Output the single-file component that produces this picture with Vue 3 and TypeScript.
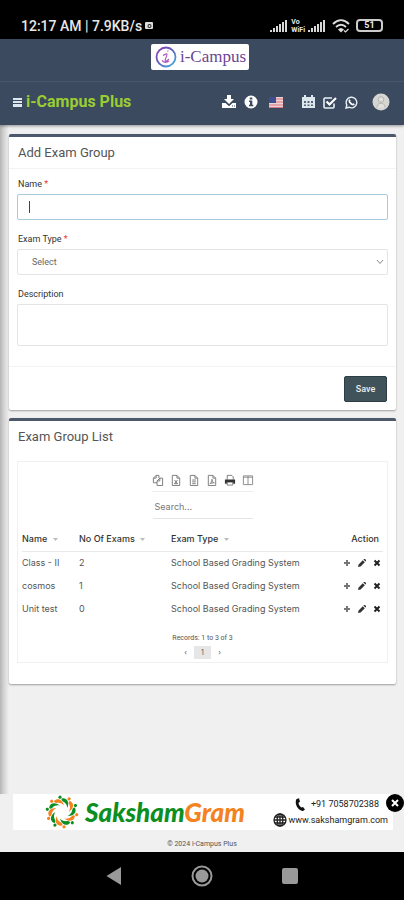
<script setup lang="ts">
import { ref } from 'vue'

interface ExamGroup {
  name: string
  exams: number
  type: string
}

const examName = ref('')
const examType = ref('')
const description = ref('')
const search = ref('')
const bannerOpen = ref(true)

const groups = ref<ExamGroup[]>([
  { name: 'Class - II', exams: 2, type: 'School Based Grading System' },
  { name: 'cosmos', exams: 1, type: 'School Based Grading System' },
  { name: 'Unit test', exams: 0, type: 'School Based Grading System' },
])

const fileOutline = 'M2.5 1.5h5l3 3v8h-8z M7.5 1.5v3h3'
const exportTools = [
  { label: 'Copy', d: 'M4.5 1.5h3v3M4.5 1.5l-3 3v5h4M4.5 1.5v3h-3 M8.500 4.500h3v8h-6v-5z M8.500 4.500v3h-3' },
  { label: 'Excel', d: fileOutline + ' M5 6.500l3 4 M8 6.500l-3 4 M4.500 10.500h4' },
  { label: 'CSV', d: fileOutline + ' M4.500 6.500h4 M4.500 8.500h4 M4.500 10.500h4' },
  { label: 'PDF', d: fileOutline + ' M4 11c2-2 2.500-3 2.500-5.500 M6.500 6c0 2 1 3 2.500 3.500l-4 .5' },
]

const signalBars = [2, 4, 6, 8, 10, 12]
const petals = [0, 1, 2, 3, 4, 5, 6, 7, 8, 9]
</script>

<template>
  <div class="screen">
    <div class="status">
      <span class="clock">12:17 AM | 7.9KB/s</span>
      <svg class="cam" viewBox="0 0 8 8" width="8" height="8"><rect width="8" height="7" rx="1" fill="#ddd" /><circle cx="4.500" cy="4" r="2" fill="#222" /><circle cx="4.500" cy="4" r="1" fill="#eee" /></svg>
      <div class="status-icons">
        <svg viewBox="0 0 18 13" width="18" height="13"><rect v-for="(h, i) in signalBars" :key="h" :x="i * 3" :y="13 - h" width="2" :height="h" fill="#d8d8d8" /></svg>
        <span class="vowifi"><b>Vo</b><small>WiFi</small></span>
        <svg viewBox="0 0 18 13" width="18" height="13"><rect v-for="(h, i) in signalBars" :key="h" :x="i * 3" :y="13 - h" width="2" :height="h" fill="#d8d8d8" /></svg>
        <svg class="wifi" viewBox="0 0 18 14" width="18" height="14" fill="none" stroke="#ddd" stroke-width="1.800"><path d="M1 5c5-5 11-5 16 0M4 8c3-3 7-3 10 0" /><path d="M6 10.500c2-2 4-2 6 0l-3 3z" fill="#ddd" stroke="none" /><path d="M12 11.500l1.500 1.500 3-3" stroke-width="1.200" /></svg>
        <span class="battery">51</span>
      </div>
    </div>

    <header class="header">
      <div class="brand-row">
        <a class="logo" href="#">
          <svg viewBox="0 0 22 22" width="22" height="22" fill="none">
            <defs><linearGradient id="ring" x1="0" y1="0" x2="1" y2="1"><stop offset="0" stop-color="#8b3fae" /><stop offset="0.500" stop-color="#5b62bd" /><stop offset="1" stop-color="#41b6e0" /></linearGradient></defs>
            <circle cx="11" cy="11" r="9.500" stroke="url(#ring)" stroke-width="1.800" />
            <path d="M8 9.500c2-1 3.500-2 4-1.500.8.8-3 6.500-1.500 7 1 .3 2.500-1 3.500-2M12.500 5.500l.8-1M7 14.500c2 2 5 2 7 .5" stroke="#b05ac0" stroke-width="1.200" />
          </svg>
          <span>i-Campus</span>
        </a>
      </div>
      <nav class="toolbar">
        <button class="icon-btn" aria-label="Menu"><svg viewBox="0 0 9 9" width="9" height="9"><path d="M0 0h9v2H0zM0 3h9v2H0zM0 6h9v3H0z" fill="#dde6ee" /></svg></button>
        <a class="site" href="#">i-Campus Plus</a>
        <div class="tools">
          <button class="icon-btn" aria-label="Download"><svg viewBox="0 0 14 14" width="14" height="14" fill="#fff"><path d="M5 0h4v4h3L7 9 2 4h3zM0 8h3.500L7 11.200 10.500 8H14v5H0z" /><path d="M10 11h1M12 11h1" stroke="#3b4a5f" /></svg></button>
          <button class="icon-btn" aria-label="Information"><svg viewBox="0 0 14 14" width="14" height="14"><circle cx="7" cy="7" r="6.500" fill="#fff" /><path d="M5.800 2.500h2.500v2H5.800zM5 5.500h3.300v4.300h1v1.500H5V9.800h1V7H5z" fill="#3b4a5f" /></svg></button>
          <button class="icon-btn flag" aria-label="Language"><svg viewBox="0 0 14 11" width="14" height="11"><rect width="14" height="11" fill="#eed3d5" /><path d="M0 2h14M0 5h14M0 8h14M0 10.500h14" stroke="#d5777f" stroke-width="1.200" /><rect width="7" height="6" fill="#3e4f8e" /></svg></button>
          <button class="icon-btn" aria-label="Calendar"><svg viewBox="0 0 13 14" width="13" height="14"><path d="M0 2h2V0h2v2h5V0h2v2h2v11H0z" fill="#dce7ee" /><path d="M2 6h2v2H2zM5.500 6h2v2h-2zM9 6h2v2H9zM2 9.500h2v1.500H2zM5.500 9.500h2v1.500h-2zM9 9.500h2v1.500H9z" fill="#526579" /></svg></button>
          <button class="icon-btn" aria-label="Tasks"><svg viewBox="0 0 14 13" width="14" height="13" fill="none" stroke="#e6f1f4"><path d="M11 7.500V11a1 1 0 0 1-1 1H2a1 1 0 0 1-1-1V3a1 1 0 0 1 1-1h7" stroke-width="1.600" /><path d="M3.500 5.500l3 3L13 2" stroke-width="2.200" stroke="#fff" /></svg></button>
          <button class="icon-btn" aria-label="WhatsApp"><svg viewBox="0 0 13 13" width="13" height="13" fill="none"><path d="M1 12l.8-3A5.300 5.300 0 1 1 4 11.200z" stroke="#e6f1f4" stroke-width="1.400" /><path d="M4.300 3.300l1.200 1-.3 1.200 2.200 2.200 1.200-.4 1.200 1c-1 2-3.500 1-4.800-.5C3.400 6.500 3 4.500 4.300 3.300z" fill="#fff" /></svg></button>
          <button class="icon-btn avatar" aria-label="Profile"><svg viewBox="0 0 18 18" width="18" height="18"><circle cx="9" cy="9" r="8.500" fill="#d5d5d2" /><circle cx="9" cy="6.500" r="2.800" fill="#e0e0dd" stroke="#b2b2af" /><path d="M5 14.500c.5-4 2-4 4-4s3.500 0 4 4" fill="#e0e0dd" stroke="#b2b2af" /></svg></button>
        </div>
      </nav>
    </header>

    <main class="content">
      <form class="card" @submit.prevent>
        <h2>Add Exam Group</h2>
        <div class="fields">
          <label for="name">Name <i>*</i></label>
          <div class="control"><input id="name" v-model="examName" class="box focused" type="text" /><span class="caret"></span></div>
          <label for="type">Exam Type <i>*</i></label>
          <div class="control">
            <select id="type" v-model="examType" class="box">
              <option value="">Select</option>
              <option>School Based Grading System</option>
            </select>
            <svg class="chevron" viewBox="0 0 8 6" width="8" height="6" fill="none" stroke="#888"><path d="M1 1l3 3.500L7 1" /></svg>
          </div>
          <label for="description">Description</label>
          <textarea id="description" v-model="description" class="box"></textarea>
        </div>
        <div class="actions"><button class="save" type="submit">Save</button></div>
      </form>

      <section class="card list">
        <h2>Exam Group List</h2>
        <div class="panel">
          <div class="exports">
            <button v-for="tool in exportTools" :key="tool.label" class="icon-btn" :aria-label="tool.label"><svg viewBox="0 0 13 13" width="12" height="12" fill="none" stroke="#777"><path :d="tool.d" /></svg></button>
            <button class="icon-btn" aria-label="Print"><svg viewBox="0 0 13 13" width="12" height="12"><path d="M3.500 6V1.500h5l1.500 1.500V6M3.500 8.500v3.500h6V8.500z" fill="#fff" stroke="#777" /><path d="M1 6h11v4.500H10V9H3v1.500H1z" fill="#333" /></svg></button>
            <button class="icon-btn" aria-label="Columns"><svg viewBox="0 0 13 13" width="12" height="12" fill="none" stroke="#888"><path d="M1.500 2h10v9.500h-10zM6.500 2v9.500M1.500 3.500h10" /></svg></button>
          </div>
          <input v-model="search" class="search" type="text" placeholder="Search..." aria-label="Search" />
          <table>
            <thead>
              <tr>
                <th class="c-name">Name <svg viewBox="0 0 5 3" width="5" height="3"><path d="M0 0h5L2.500 3z" /></svg></th>
                <th class="c-num">No Of Exams <svg viewBox="0 0 5 3" width="5" height="3"><path d="M0 0h5L2.500 3z" /></svg></th>
                <th>Exam Type <svg viewBox="0 0 5 3" width="5" height="3"><path d="M0 0h5L2.500 3z" /></svg></th>
                <th class="c-act">Action</th>
              </tr>
            </thead>
            <tbody>
              <tr v-for="group in groups" :key="group.name">
                <td>{{ group.name }}</td>
                <td>{{ group.exams }}</td>
                <td>{{ group.type }}</td>
                <td>
                  <div class="row-actions">
                    <button class="icon-btn" aria-label="Add exam"><svg viewBox="0 0 8 8" width="8" height="8" stroke="#777" stroke-width="2"><path d="M4 1v6M1 4h6" /></svg></button>
                    <button class="icon-btn" aria-label="Edit"><svg viewBox="0 0 8 8" width="8" height="8" fill="#333"><path d="M0 8l.6-2.600L4.800 1.200l2 2L2.600 7.400zM5.400.6L6 0h1l1 1v1l-.6.6z" /></svg></button>
                    <button class="icon-btn" aria-label="Delete"><svg viewBox="0 0 8 8" width="8" height="8" stroke="#222" stroke-width="2"><path d="M1.500 1.500l5 5M6.500 1.500l-5 5" /></svg></button>
                  </div>
                </td>
              </tr>
            </tbody>
          </table>
          <div class="records">Records: 1 to 3 of 3</div>
          <div class="pages">
            <button aria-label="Previous page">‹</button>
            <button class="current">1</button>
            <button aria-label="Next page">›</button>
          </div>
        </div>
      </section>
    </main>

    <footer class="footer">
      <div v-if="bannerOpen" class="banner">
        <a class="sponsor" href="#">
          <svg viewBox="-17 -17 34 34" width="34" height="34">
            <g v-for="p in petals" :key="p" :transform="`rotate(${p * 36})`" :fill="p % 2 ? '#f58220' : '#0b8f22'">
              <path d="M0-13.500C4-14.500 8-11 5.500-4 5-7 4-9 1-10.500-.5-11.500-1-13-0-13.500z" />
              <circle cx="-2" cy="-14.800" r="1.600" />
            </g>
          </svg>
          <span class="wordmark">Saksham<em>Gram</em></span>
        </a>
        <div class="contact">
          <div class="line"><svg viewBox="0 0 10 13" width="10" height="13"><path d="M1.500 1L4 .2l1 3.500-1.500 1c.3 2 1.300 3.600 2.800 4.800l1.700-.6 2 2.600-2 1.500C3 12.500-1 6 1.500 1z" fill="#111" /></svg><span>+91 7058702388</span></div>
          <div class="line"><svg viewBox="0 0 14 14" width="14" height="14" fill="none" stroke="#222" stroke-width="1.300"><circle cx="7" cy="7" r="6" /><ellipse cx="7" cy="7" rx="2.800" ry="6" /><path d="M1 7h12M2 4h10M2 10h10M7 1v12" /></svg><span>www.sakshamgram.com</span></div>
        </div>
        <button class="close" aria-label="Close banner" @click="bannerOpen = false"><svg viewBox="0 0 8 8" width="8" height="8" stroke="#fff" stroke-width="2"><path d="M1 1l6 6M7 1L1 7" /></svg></button>
      </div>
      <div class="copyright">© 2024 i-Campus Plus</div>
    </footer>

    <div class="navbar">
      <button class="icon-btn" aria-label="Back"><svg viewBox="0 0 20 20" width="20" height="20"><path d="M2.500 10L17 1v18z" fill="#999" /></svg></button>
      <button class="icon-btn" aria-label="Home"><svg viewBox="0 0 22 22" width="22" height="22"><circle cx="11" cy="11" r="9.500" fill="none" stroke="#999" stroke-width="2" /><circle cx="11" cy="11" r="6.500" fill="#999" /></svg></button>
      <button class="icon-btn" aria-label="Recent apps"><svg viewBox="0 0 20 20" width="20" height="20"><rect x="2" y="2" width="16" height="16" rx="2" fill="#999" /></svg></button>
    </div>
  </div>
</template>

<style>
body {
  background: #f0f0f0;
}
</style>

<style scoped>
* {
  box-sizing: border-box;
}
.screen {
  display: flex;
  flex-direction: column;
  min-height: 100vh;
  font: 9px/16px Roboto, "Liberation Sans", sans-serif;
  color: #555;
  background: #f0f0f0;
}
a {
  color: inherit;
  text-decoration: none;
}
svg {
  display: block;
  flex: none;
}
button {
  font: inherit;
  color: inherit;
  border: 0;
  padding: 0;
  background: none;
}
.icon-btn {
  display: flex;
  align-items: center;
  justify-content: center;
}
.status {
  display: flex;
  align-items: center;
  height: 39px;
  padding: 12px 21px 0;
  background: #000;
  color: #e8e8e8;
}
.clock {
  font-size: 14px;
  font-weight: 500;
}
.cam {
  margin-left: 3px;
}
.status-icons {
  display: flex;
  align-items: center;
  gap: 3px;
  margin-left: auto;
}
.vowifi {
  display: flex;
  flex-direction: column;
  font-size: 7px;
  line-height: 8px;
}
.vowifi small {
  font-size: 7px;
  font-weight: 700;
}
.wifi {
  margin: 0 3px;
}
.battery {
  width: 27px;
  height: 13px;
  border: 2px solid #ccc;
  border-radius: 4px;
  font-size: 9px;
  font-weight: 700;
  line-height: 9px;
  text-align: center;
}
.header {
  background: #3b4a5f;
  box-shadow: 0 1px 3px rgba(0, 0, 0, 0.4);
  z-index: 1;
}
.brand-row {
  display: flex;
  justify-content: center;
  padding: 5px 4px 11px 0;
  border-bottom: 1px solid #47566a;
}
.logo {
  display: flex;
  align-items: center;
  gap: 3px;
  height: 26px;
  padding: 0 3px 0 4px;
  border-radius: 2px;
  background: #fff;
  color: #6a4596;
  font: 17px/26px "Liberation Serif", serif;
}
.toolbar {
  display: flex;
  align-items: center;
  height: 43px;
  padding: 0 14px 3px 13px;
}
.site {
  margin-left: 4px;
  color: #9acd32;
  font-size: 16px;
  font-weight: 700;
}
.tools {
  display: flex;
  align-items: center;
  gap: 8px;
  margin-left: auto;
}
.flag {
  margin: 0 11px 0 3px;
}
.avatar {
  margin-left: 6px;
}
.content {
  flex: 1;
  display: flex;
  flex-direction: column;
  gap: 8px;
  padding: 9px 8px 16px 9px;
  background: linear-gradient(90deg, #b4b4b4, #d4d4d4 4px, #f0f0f0 9px);
}
.card {
  border-top: 3px solid #4c596b;
  border-radius: 2px;
  background: #fff;
  box-shadow: 0 1px 2px rgba(0, 0, 0, 0.35);
}
h2 {
  margin: 0;
  padding: 0 9px;
  font-size: 13px;
  font-weight: 400;
  line-height: 31px;
  color: #555;
}
.fields {
  padding: 7px 8px 20px;
  border-top: 1px solid #f3f3f3;
}
label {
  display: block;
  padding-left: 1px;
  color: #333;
}
label i {
  color: #e33;
  font-style: normal;
}
.control {
  position: relative;
  margin-bottom: 11px;
}
.box {
  display: block;
  width: 100%;
  height: 26px;
  margin: 2px 0 0;
  padding: 0 14px;
  border: 1px solid #e4e4e4;
  border-radius: 2px;
  background: #fff;
  color: #666;
  font: inherit;
  appearance: none;
  outline: none;
  resize: none;
}
textarea.box {
  height: 42px;
}
.focused {
  border-color: #a9c9dc;
}
.caret {
  position: absolute;
  left: 12px;
  top: 7px;
  width: 1px;
  height: 12px;
  background: #444;
}
.chevron {
  position: absolute;
  right: 4px;
  top: 10px;
}
.actions {
  display: flex;
  justify-content: flex-end;
  padding: 9px 9px 8px;
  border-top: 1px solid #f3f3f3;
}
.save {
  width: 43px;
  height: 26px;
  border: 1px solid #2c3d43;
  border-radius: 2px;
  background: #40535a;
  color: #eee;
  font-weight: 500;
}
.list {
  padding-bottom: 21px;
}
.panel {
  margin: 9px 8px 0;
  padding: 11px 4px 3px;
  border: 1px solid #f0f0f0;
  font-family: Inter, Roboto, sans-serif;
}
.exports {
  display: flex;
  justify-content: center;
  gap: 6px;
  width: max-content;
  margin: 0 auto;
  padding-bottom: 4px;
  border-bottom: 1px solid #eee;
}
.exports .icon-btn {
  width: 12px;
  height: 14px;
}
.search {
  display: block;
  width: 100px;
  height: 22px;
  margin: 5px auto 9px;
  padding: 0 2px 2px;
  border: 0;
  border-bottom: 1px solid #e5e5e5;
  outline: none;
  background: none;
  font: inherit;
}
.search::placeholder {
  color: #777;
  opacity: 1;
}
table {
  width: 100%;
  table-layout: fixed;
  border-collapse: collapse;
}
th {
  height: 23px;
  padding: 0;
  border-bottom: 1px solid #e8e8e8;
  color: #333;
  font-weight: 500;
  text-align: left;
  white-space: nowrap;
}
th svg {
  display: inline-block;
  margin-left: 3px;
  vertical-align: middle;
  fill: #bbb;
}
td {
  height: 23px;
  padding: 0;
  white-space: nowrap;
}
.c-name {
  width: 57px;
}
.c-num {
  width: 92px;
}
.c-act {
  width: 50px;
  padding-right: 4px;
  text-align: right;
}
.row-actions {
  display: flex;
  justify-content: flex-end;
  gap: 7px;
  padding-right: 2px;
}
.records {
  padding-top: 10px;
  font: 7px/16px Roboto, sans-serif;
  text-align: center;
}
.pages {
  display: flex;
  justify-content: center;
  font-size: 7px;
  line-height: 13px;
}
.pages button {
  width: 17px;
}
.pages .current {
  background: #e6e6e6;
}
.footer {
  padding-left: 13px;
}
.banner {
  position: relative;
  display: flex;
  align-items: center;
  justify-content: space-between;
  height: 36px;
  margin-right: 11px;
  padding: 0 5px 0 32px;
  background: #fff;
}
.sponsor {
  display: flex;
  align-items: center;
  gap: 6px;
}
.wordmark {
  color: #0b8f22;
  font: italic 900 26px/34px Lato, sans-serif;
}
.wordmark em {
  color: #f58220;
}
.contact {
  display: flex;
  flex-direction: column;
  align-items: flex-end;
  color: #222;
}
.line {
  display: flex;
  align-items: center;
  gap: 2px;
}
.line:first-child {
  gap: 6px;
  padding-right: 9px;
}
.close {
  position: absolute;
  top: 0;
  right: -11px;
  display: grid;
  place-items: center;
  width: 18px;
  height: 18px;
  border-radius: 50%;
  background: #000;
}
.copyright {
  padding: 6px 13px 0 0;
  font-size: 7px;
  text-align: center;
}
.navbar {
  display: flex;
  align-items: center;
  justify-content: center;
  gap: 67px;
  height: 48px;
  background: #000;
}
</style>
